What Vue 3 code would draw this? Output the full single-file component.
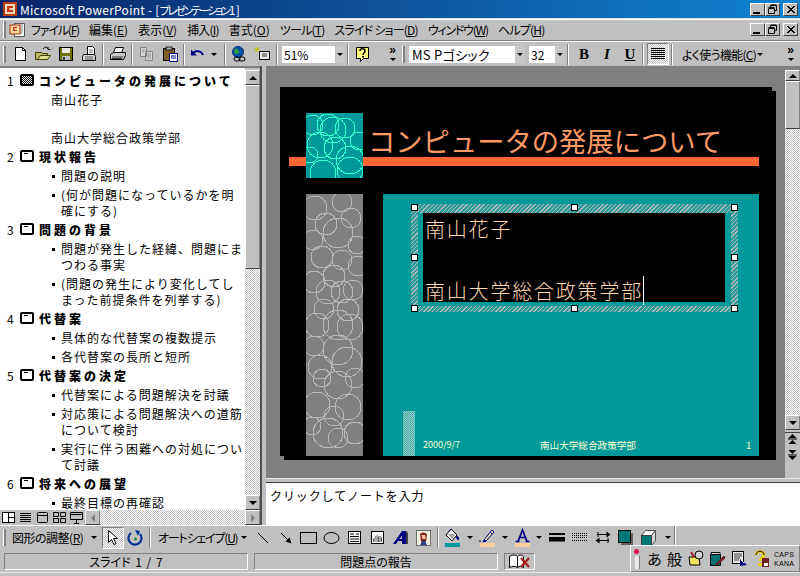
<script setup>
// PowerPoint 2000 window, normal view with outline + slide + notes

const menus = [
  ['ファイル', 'F', 'k4'], ['編集', 'E', ''], ['表示', 'V', ''], ['挿入', 'I', 'k2'], ['書式', 'O', ''],
  ['ツール', 'T', 'k2'], ['スライド ショー', 'D', 'k2'], ['ウィンドウ', 'W', 'k3'], ['ヘルプ', 'H', 'k2'],
]

const outline = [
  { no: 1, title: 'コンピュータの発展について', filled: true, sub: ['南山花子', '', '南山大学総合政策学部'] },
  { no: 2, title: '現状報告', items: [['問題の説明'], ['(何が問題になっているかを明', '確にする)']] },
  { no: 3, title: '問題の背景', items: [['問題が発生した経緯、問題にま', 'つわる事実'], ['(問題の発生により変化してし', 'まった前提条件を列挙する)']] },
  { no: 4, title: '代替案', items: [['具体的な代替案の複数提示'], ['各代替案の長所と短所']] },
  { no: 5, title: '代替案の決定', items: [['代替案による問題解決を討議'], ['対応策による問題解決への道筋', 'について検討'], ['実行に伴う困難への対処につい', 'て討議']] },
  { no: 6, title: '将来への展望', items: [['最終目標の再確認']] },
]

const tealCircles = [
  [22, 12, 11], [39, 15, 10], [7, 12, 10], [14, 32, 13], [27, 17, 13],
  [44, 47, 14], [4, 42, 8], [17, 60, 13], [44, 57, 13], [29, 35, 11], [53, 28, 9],
]

const grayCircles = [
  [9, 14, 12], [36, 8, 10], [45, 24, 10], [32, 39, 15], [7, 46, 10], [51, 51, 9], [20, 30, 11],
  [16, 63, 11], [36, 66, 10], [52, 72, 10], [22, 98, 12], [36, 98, 11], [47, 96, 10], [8, 88, 11],
  [28, 82, 11], [18, 115, 10], [42, 116, 11],
  [32, 131, 15], [11, 131, 12], [44, 133, 13], [32, 156, 15], [41, 168, 15], [8, 152, 10],
  [14, 173, 12], [16, 184, 9], [49, 184, 10], [32, 191, 14], [11, 211, 13],
  [42, 213, 13], [22, 239, 15], [32, 244, 10], [49, 239, 11], [28, 222, 10], [6, 232, 9],
]
</script>

<template>
  <div class="app">
    <header class="titlebar">
      <svg class="app-icon" width="14" height="14" viewBox="0 0 14 14"><rect width="14" height="14" fill="#b8400c" /><rect x="2" y="2" width="10" height="10" fill="#e8d8c0" /><path d="M10 4H4v6h6V8H6.500V6H10z" fill="#c8380c" /></svg>
      <span class="title-text">Microsoft PowerPoint - [<span class="title-kana">プレゼンテーション</span>1]</span>
      <div class="win-btns">
        <button class="win-btn"><svg width="13" height="11" viewBox="0 0 13 11"><rect x="2" y="8" width="7" height="2" fill="#000" /></svg></button>
        <button class="win-btn"><svg width="13" height="11" viewBox="0 0 13 11"><path d="M4.500 3.500v-2h6v5h-2M2.500 4.500h6v5h-6z M2.500 3.500h6 M4.500 1h6" fill="none" stroke="#000" /></svg></button>
        <button class="win-btn gap"><svg width="13" height="11" viewBox="0 0 13 11"><path d="M3 2l7 7M4 2l7 7M10 2l-7 7M11 2l-7 7" stroke="#000" fill="none" /></svg></button>
      </div>
    </header>

    <nav class="menubar">
      <i class="grip"></i>
      <svg class="doc-icon" width="17" height="16" viewBox="0 0 17 16"><path d="M5.500 1.500h10v13h-10z" fill="#fff" stroke="#555" /><path d="M11 3h3M11 5h3M11 7h3M11 9h3M11 11h3" stroke="#888" /><rect x="1" y="3" width="10" height="9" fill="#f0d8a0" stroke="#b03010" /><path d="M8 5H4v4h4V8H5.500V6H8z" fill="#c03010" /></svg>
      <span v-for="m in menus" :key="m[1]" class="menu-item" :class="m[2]">{{ m[0] }}(<u>{{ m[1] }}</u>)</span>
      <div class="win-btns">
        <button class="win-btn"><svg width="13" height="11" viewBox="0 0 13 11"><rect x="2" y="8" width="7" height="2" fill="#000" /></svg></button>
        <button class="win-btn"><svg width="13" height="11" viewBox="0 0 13 11"><path d="M4.500 3.500v-2h6v5h-2M2.500 4.500h6v5h-6z M2.500 3.500h6 M4.500 1h6" fill="none" stroke="#000" /></svg></button>
        <button class="win-btn gap"><svg width="13" height="11" viewBox="0 0 13 11"><path d="M3 2l7 7M4 2l7 7M10 2l-7 7M11 2l-7 7" stroke="#000" fill="none" /></svg></button>
      </div>
    </nav>

    <div class="toolbar">
      <i class="grip"></i>
      <span class="tb first"><svg width="16" height="16" viewBox="0 0 16 16"><path d="M3.500 1.500h7l3 3v10h-10z" fill="#fff" stroke="#000" /><path d="M10.500 1.500v3h3" fill="none" stroke="#000" /></svg></span>
      <span class="tb"><svg width="16" height="16" viewBox="0 0 16 16"><path d="M.500 6.500h6l1 1h5v6H.500z" fill="#b8b860" stroke="#404000" /><path d="M2.500 13.500l3-4h10l-3 4z" fill="#e0e090" stroke="#404000" /><path d="M8 3c2-2.500 4-2.500 5 0M13 1v2.500h2.500" fill="none" stroke="#000" /></svg></span>
      <span class="tb"><svg width="16" height="16" viewBox="0 0 16 16"><rect x="1.500" y="1.500" width="13" height="13" fill="#707000" stroke="#000" /><rect x="4" y="2" width="8" height="5" fill="#e8e8e8" /><rect x="4" y="10" width="8" height="4" fill="#c0c0c0" /><rect x="5" y="11" width="2" height="3" fill="#303030" /></svg></span>
      <span class="tb"><svg width="16" height="16" viewBox="0 0 16 16"><path d="M6.500 .500h5l2 2v6h-7z" fill="#fff" stroke="#000" /><path d="M8 4h4M8 6h4" stroke="#777" /><path d="M2.500 8.500h11l1 2v4h-13v-4z" fill="#d8d8d8" stroke="#000" /><path d="M4 11h8M4 13h8" stroke="#555" /></svg></span>
      <i class="sep"></i>
      <span class="tb"><svg width="16" height="16" viewBox="0 0 16 16"><path d="M5.500 1.500h8l-2 5h-8z" fill="#fff" stroke="#000" /><path d="M.500 8.500l3-2h12v3l-2 4h-13z" fill="#c8c8c8" stroke="#000" /><path d="M2 11h11M2 12.500h10" stroke="#333" /></svg></span>
      <i class="sep"></i>
      <span class="tb"><svg width="16" height="16" viewBox="0 0 16 16"><path d="M1.500 1.500h6v9h-6zM6.500 5.500h7v9h-7z" fill="#d8d8d8" stroke="#808080" /><path d="M8 8h4M8 10h4M8 12h4M3 4h3M3 6h2" stroke="#909090" /></svg></span>
      <span class="tb"><svg width="16" height="16" viewBox="0 0 16 16"><rect x="1.500" y="2.500" width="11" height="12" fill="#806020" stroke="#000" /><rect x="4" y="1" width="6" height="3" fill="#b0b0b0" stroke="#000" stroke-width=".8" /><path d="M7.500 7.500h8v8h-8z" fill="#fff" stroke="#000080" /><path d="M9 10h5M9 12h5" stroke="#000080" /></svg></span>
      <i class="sep"></i>
      <span class="tb undo"><svg width="16" height="14" viewBox="0 0 16 14"><path d="M3 7c2-4 8-4 10 1" fill="none" stroke="#000080" stroke-width="2" /><path d="M1 2.500v6h6z" fill="#000080" /></svg></span>
      <i class="drop"></i>
      <i class="sep after-drop"></i>
      <span class="tb"><svg width="17" height="17" viewBox="0 0 17 17"><circle cx="7" cy="6" r="5.500" fill="#0850a8" stroke="#003070" /><path d="M4 3c2-1 3 1 4 2s-1 3-3 3-2-3-1-5z" fill="#30a040" /><rect x="3" y="11" width="6" height="4" rx="2" fill="none" stroke="#000" /><rect x="8" y="11" width="6" height="4" rx="2" fill="none" stroke="#000" /><path d="M11 2l2 2" stroke="#505050" /></svg></span>
      <span class="tb"><svg width="17" height="16" viewBox="0 0 17 16"><path d="M3 1v5M.500 3.500h5M1 1.500l4 4M5 1.500l-4 4" stroke="#c0c000" /><path d="M5.500 5.500h10v8h-10z" fill="#e8e8e8" stroke="#000" /><path d="M8 8h5M8 10h5" stroke="#333" /></svg></span>
      <i class="sep"></i>
      <span class="combo zoom-combo"><span class="combo-val">51%</span><i class="combo-btn"></i></span>
      <i class="sep"></i>
      <span class="tb"><svg width="16" height="17" viewBox="0 0 16 17"><path d="M1.500 1.500h12v11h-5l-3 3v-3h-4z" fill="#ffff80" stroke="#000" /><path d="M5 5c0-3 5-3 5 0 0 2-2 2-2 4" fill="none" stroke="#000" stroke-width="1.600" /><rect x="7" y="10" width="2" height="1.500" /></svg></span>
      <span class="chevron"><b class="chev-mark">»</b><i class="chev-drop"></i></span>

      <i class="grip second"></i>
      <span class="combo font-combo"><span class="combo-val">MS Pゴシック</span><i class="combo-btn"></i></span>
      <span class="combo size-combo"><span class="combo-val">32</span><i class="combo-btn"></i></span>
      <i class="sep"></i>
      <span class="tb fmt bold">B</span>
      <span class="tb fmt italic">I</span>
      <span class="tb fmt under">U</span>
      <i class="sep"></i>
      <span class="tb pressed"><svg width="16" height="14" viewBox="0 0 16 14"><path d="M1 1.500h14M1 3.500h14M1 5.500h14M1 7.500h14M1 9.500h14M1 11.500h14" stroke="#000" /></svg></span>
      <i class="sep"></i>
      <span class="tb-label often">よく使う機能(<u>C</u>)</span>
      <i class="drop often-drop"></i>
      <span class="chevron last"><b class="chev-mark">»</b><i class="chev-drop"></i></span>
    </div>

    <main class="workspace">
      <section class="left">
        <div class="left-top">
          <div class="outline">
            <template v-for="s in outline" :key="s.no">
              <div class="o-title">
                <span class="o-no">{{ s.no }}</span>
                <i class="o-icon" :class="{ filled: s.filled }"></i>
                <b class="o-head">{{ s.title }}</b>
              </div>
              <div v-for="(t, i) in s.sub" :key="i" class="o-sub">{{ t }}</div>
              <div v-for="(lines, i) in s.items" :key="i" class="o-item">
                <div v-for="l in lines" :key="l">{{ l }}</div>
              </div>
            </template>
          </div>
          <div class="vscroll left-scroll">
            <button class="sb-btn"><i class="tri up"></i></button>
            <div class="sb-thumb tall"></div>
            <div class="sb-track"></div>
            <button class="sb-btn"><i class="tri down"></i></button>
          </div>
        </div>
        <div class="viewbar">
          <div class="views">
            <svg width="17" height="15" viewBox="0 0 17 15"><rect x="2.500" y="2.500" width="12" height="10" fill="#fff" stroke="#000" /><path d="M8.500 2v11M8.500 7.500h6" stroke="#000" /></svg>
            <svg width="17" height="15" viewBox="0 0 17 15"><path d="M3 3.500h11M3 5.500h11M3 7.500h11M3 9.500h11M3 11.500h11" stroke="#000" /></svg>
            <svg width="17" height="15" viewBox="0 0 17 15"><rect x="3.500" y="2.500" width="10" height="10" rx="1" fill="#c0c0c0" stroke="#000" /><path d="M4 5.500h9" stroke="#000" /></svg>
            <svg width="17" height="15" viewBox="0 0 17 15"><path d="M2.500 2.500h5v4h-5zM9.500 2.500h5v4h-5zM2.500 8.500h5v4h-5zM9.500 8.500h5v4h-5z" fill="none" stroke="#000" /></svg>
            <svg width="17" height="15" viewBox="0 0 17 15"><path d="M2.500 2.500h12v7h-12z" fill="none" stroke="#000" /><path d="M2 4.500h13M8.500 10v3M6 13.500h5" stroke="#000" /></svg>
          </div>
          <button class="sb-btn h"><i class="tri left-tri gray"></i></button>
          <div class="sb-track"></div>
          <button class="sb-btn h"><i class="tri right-tri gray"></i></button>
        </div>
      </section>

      <div class="splitter"></div>

      <section class="right">
        <div class="slide-row">
          <div class="slide-area">
            <div class="slide">
              <div class="orange-bar"></div>
              <svg class="teal-square" width="57" height="65" viewBox="0 0 57 65" shape-rendering="crispEdges">
                <circle v-for="(c, i) in tealCircles" :key="i" :cx="c[0]" :cy="c[1]" :r="c[2]" fill="none" stroke="#33ffcc" />
              </svg>
              <div class="slide-title">コンピュータの発展について</div>
              <svg class="gray-strip" width="57" height="262" viewBox="0 0 57 262" shape-rendering="crispEdges">
                <circle v-for="(c, i) in grayCircles" :key="i" :cx="c[0]" :cy="c[1]" :r="c[2]" fill="none" stroke="#b8b8b8" />
              </svg>
              <div class="teal-box"></div>
              <div class="mini-strip"></div>
              <div class="textbox">
                <div class="textbox-pad">
                  <div class="textbox-inner">南山花子<br /><br /><span class="caret">南山大学総合政策学部</span></div>
                </div>
                <i class="handle hl ht"></i><i class="handle hm ht"></i><i class="handle hr ht"></i>
                <i class="handle hl hc"></i><i class="handle hr hc"></i>
                <i class="handle hl hb"></i><i class="handle hm hb"></i><i class="handle hr hb"></i>
              </div>
              <span class="foot f-date">2000/9/7</span>
              <span class="foot f-mid">南山大学総合政策学部</span>
              <span class="foot f-no">1</span>
            </div>
          </div>
          <div class="vscroll main-scroll">
            <div class="sb-cap"></div>
            <button class="sb-btn"><i class="tri up"></i></button>
            <div class="sb-thumb"></div>
            <div class="sb-track"></div>
            <button class="sb-btn"><i class="tri down"></i></button>
            <div class="page-btns">
              <svg width="15" height="28" viewBox="0 0 15 28"><path d="M7.500 1l4 4h-8zM7.500 7l4 4h-8z" /><path d="M3 6h9" stroke="#000" /><path d="M7.500 27l4-4h-8zM7.500 21l4-4h-8z" /><path d="M3 22h9" stroke="#000" /></svg>
            </div>
            <div class="sb-rest"></div>
          </div>
        </div>
        <div class="hsplit"></div>
        <div class="notes">クリックしてノートを入力</div>
      </section>
    </main>

    <div class="toolbar draw">
      <i class="grip"></i>
      <span class="tb-label arrange">図形の調整(<u>R</u>)</span>
      <i class="drop d5"></i>
      <span class="tb pressed arrow-btn"><svg width="14" height="17" viewBox="0 0 14 17"><path d="M2.500 1.500v12l3-3 2.500 5 2-1-2.500-5h4z" fill="#fff" stroke="#000" /></svg></span>
      <span class="tb"><svg width="17" height="17" viewBox="0 0 17 17"><path d="M4 4a6.500 6.500 0 1 0 9 1" fill="none" stroke="#003090" stroke-width="2.200" /><path d="M8 1l5 1-2 5z" fill="#003090" /><circle cx="8.500" cy="10" r="1.500" fill="#108040" /></svg></span>
      <i class="sep"></i>
      <span class="tb-label autoshape">オートシェイプ(<u>U</u>)</span>
      <i class="drop d5"></i>
      <span class="tb line-btn"><svg width="14" height="14" viewBox="0 0 14 14"><path d="M2 2l10 10" stroke="#000" /></svg></span>
      <span class="tb"><svg width="14" height="14" viewBox="0 0 14 14"><path d="M2 2l9 9" stroke="#000" /><path d="M12.500 12.500l-6-2 4-4z" /></svg></span>
      <span class="tb"><svg width="17" height="14" viewBox="0 0 17 14"><rect x=".500" y="1.500" width="16" height="11" fill="none" stroke="#000" /></svg></span>
      <span class="tb"><svg width="17" height="14" viewBox="0 0 17 14"><ellipse cx="8.500" cy="7" rx="7.500" ry="5.500" fill="none" stroke="#000" /></svg></span>
      <span class="tb"><svg width="15" height="15" viewBox="0 0 15 15"><rect x="1.500" y="1.500" width="12" height="12" fill="#fff" stroke="#000" /><path d="M3 4h4M3 6.500h9M3 9h9M3 11.500h9M9 4h3" stroke="#000" /></svg></span>
      <span class="tb"><svg width="15" height="15" viewBox="0 0 15 15"><rect x="1.500" y="1.500" width="12" height="12" fill="#fff" stroke="#000" /><path d="M3 12h9V8l-2-2-1 1-2-3-2 3-2 2z" fill="#555" /><path d="M7 3v9M5 7v5M10 7v5" stroke="#fff" /></svg></span>
      <span class="tb"><svg width="17" height="17" viewBox="0 0 17 17"><path d="M1 15L10 2h4v13h-4v-3H6l-2 3z" fill="#000080" /><path d="M7.500 10H10V6.500z" fill="#c0c0c0" /><path d="M14 2l2 2v11h-2z" fill="#404040" /></svg></span>
      <span class="tb"><svg width="15" height="16" viewBox="0 0 15 16"><rect x=".500" y=".500" width="14" height="15" fill="#f0f0e0" stroke="#000" stroke-dasharray="1 1" /><path d="M4 4c2-2 6-2 7 1l-1 7H5z" fill="#902020" /><path d="M5.500 5h4v4h-3z" fill="#f0c8a0" /><path d="M4 15l3-5 2 1 2 4z" fill="#204080" /></svg></span>
      <i class="sep"></i>
      <span class="tb"><svg width="17" height="19" viewBox="0 0 17 19"><path d="M7 1l6 6-5 6-6-6z" fill="#f0f0f0" stroke="#000" /><path d="M4 6h7l-3 5z" fill="#a0a0a0" /><path d="M13 8c2 1 2 3 1 4-1-1-2-2-1-4zM5 3l3-2" fill="#000080" stroke="#000080" /><rect x="1" y="15" width="15" height="4" fill="#009999" /></svg></span>
      <i class="drop d3"></i>
      <span class="tb l3"><svg width="17" height="19" viewBox="0 0 17 19"><path d="M5 12L13 2l2 2-8 9z" fill="#f8e8a0" stroke="#000080" /><path d="M5 12l2 1-3 1zM11 4l2 2" stroke="#000080" fill="#000080" /><path d="M0 13h3" stroke="#000" stroke-dasharray="2 1" /><rect x="1" y="15" width="15" height="4" fill="#ffcc99" /></svg></span>
      <i class="drop d3"></i>
      <span class="tb l3"><svg width="17" height="19" viewBox="0 0 17 19"><path d="M1.500 13.500h4M11.500 13.500h4M4 13.500L8.500 2l4.500 11.500M5.500 9.500h6" fill="none" stroke="#000080" stroke-width="1.700" /><rect x="1" y="15" width="15" height="4" fill="#ffcc99" /></svg></span>
      <i class="drop d2"></i>
      <span class="tb l3"><svg width="16" height="10" viewBox="0 0 16 10"><rect y="0" width="16" height="2" /><rect y="4" width="16" height="4.500" /></svg></span>
      <span class="tb"><svg width="16" height="10" viewBox="0 0 16 10"><path d="M0 .500h16M0 2.500h16M0 4.500h16M0 7.500h16" stroke="#000" stroke-dasharray="1 1" /></svg></span>
      <span class="tb"><svg width="16" height="15" viewBox="0 0 16 15"><path d="M2 4.500h12M2 10.500h12" stroke="#000" /><path d="M15.500 4.500l-4-3v6zM.500 10.500l4-3v6z" /><path d="M3 2v5M13 8v5" stroke="#000" /></svg></span>
      <span class="tb"><svg width="15" height="15" viewBox="0 0 15 15"><rect x="3" y="3" width="12" height="12" fill="#606060" /><rect x=".500" y=".500" width="12" height="12" fill="#007878" stroke="#000" /></svg></span>
      <span class="tb"><svg width="17" height="17" viewBox="0 0 17 17"><path d="M1.500 6.500l4-5h10l-4 5z" fill="#fff" stroke="#505050" /><path d="M11.500 6.500l4-5v10l-4 5z" fill="#d8d8d8" stroke="#505050" /><rect x="1.500" y="6.500" width="10" height="10" fill="#007878" stroke="#404040" /></svg></span>
      <i class="drop d5"></i>
      <i class="draw-end"></i>
    </div>

    <footer class="statusbar">
      <div class="st-panel st-1">スライド 1 / 7</div>
      <div class="st-panel st-2">問題点の報告</div>
      <div class="st-panel st-3"><svg width="22" height="15" viewBox="0 0 22 15"><path d="M.500 13.500V2.500c3-2 6-2 8 0v11c-2-1.500-5-1.500-8 0z" fill="#fff" stroke="#000" /><path d="M8.500 2.500c2-2 4-2 6 0v11c-2-1.500-4-1.500-6 0z" fill="#fff" stroke="#000" /><path d="M12 4l8 9M20 4l-8 9" stroke="#a02020" stroke-width="2.200" /></svg></div>
    </footer>

    <aside class="ime">
      <div class="ime-pin"><i class="pin-head"></i><i class="pin-bar"></i></div>
      <span class="ime-char a">あ</span>
      <span class="ime-char">般</span>
      <svg class="ime-ico" width="16" height="17" viewBox="0 0 16 17"><path d="M1 7h10l1 8H2z" fill="#f0e060" stroke="#000" /><circle cx="11" cy="5" r="4" fill="#d0d0d0" stroke="#000" /><path d="M3 2l3 5" stroke="#a02020" stroke-width="2" /></svg>
      <svg class="ime-ico" width="17" height="17" viewBox="0 0 17 17"><path d="M1.500 4.500h10v11h-10z" fill="#007070" stroke="#000" /><path d="M2 2.500h9v2H2z" fill="#e0e0e0" stroke="#000" /><path d="M7 14l8-8 1 2-8 7z" fill="#a02020" stroke="#402020" /></svg>
      <svg class="ime-ico" width="17" height="17" viewBox="0 0 17 17"><rect x="1.500" y="1.500" width="11" height="12" fill="#f0f0f0" stroke="#000" /><path d="M3 4h8M3 6h8M3 8h6M3 10h5" stroke="#333" /><path d="M9 9l7 6-7 1z" fill="#000080" /><path d="M10 10l3 3" stroke="#fff" /></svg>
      <svg class="ime-ico" width="17" height="18" viewBox="0 0 17 18"><path d="M3 5c0-5 8-5 8 0 0 3-4 3-4 6" fill="none" stroke="#e8d000" stroke-width="3" /><rect x="5" y="13" width="4" height="3" fill="#e8d000" /><path d="M3 5c0-5 8-5 8 0" fill="none" stroke="#000" /><path d="M9 8h7v9H9z" fill="#702020" /><path d="M11 13h4v3h-4z" fill="#fff" /></svg>
      <div class="ime-caps"><span>CAPS</span><span>KANA</span></div>
    </aside>
  </div>
</template>

<style>
html, body { margin: 0; background: #c0c0c0; }
</style>

<style scoped>
.app {
  position: relative;
  width: 800px;
  height: 576px;
  overflow: hidden;
  display: flex;
  flex-direction: column;
  background: #c0c0c0;
  font-family: "Noto Sans CJK JP", "Liberation Sans", sans-serif;
  font-size: 12px;
  font-feature-settings: "palt";
  color: #000;
}
i { display: block; flex: none; }
button { padding: 0; margin: 0; }

.titlebar {
  flex: none;
  height: 18px;
  display: flex;
  align-items: center;
  background: linear-gradient(90deg, #0a246a, #1084d0);
  color: #fff;
  border-bottom: 1px solid #e0e0e0;
}
.app-icon { margin-left: 3px; flex: none; }
.title-text { margin-left: 3px; font-size: 12px; letter-spacing: .25px; white-space: nowrap; }
.title-kana { font-size: 11px; letter-spacing: -2.2px; }
.win-btns { margin-left: auto; margin-right: 2px; display: flex; }
.win-btn {
  width: 15px;
  height: 13px;
  box-sizing: border-box;
  background: #c0c0c0;
  border: 1px solid;
  border-color: #fff #404040 #404040 #fff;
  display: flex;
  overflow: hidden;
}
.win-btn.gap { margin-left: 3px; }

.menubar {
  flex: none;
  height: 21px;
  display: flex;
  align-items: center;
  border-bottom: 1px solid #808080;
  box-shadow: inset 0 1px 0 #fff;
}
.grip {
  width: 1px;
  height: 17px;
  margin-left: 3px;
  background: #fff;
  border-right: 2px solid #808080;
}
.doc-icon { margin-left: 3px; flex: none; }
.menu-item { margin-left: 10px; white-space: nowrap; line-height: 16px; }
.menu-item:first-of-type { margin-left: 5px; }
.k2 { letter-spacing: -.8px; }
.k3 { letter-spacing: -1.2px; }
.k4 { letter-spacing: -1.2px; }
u { text-underline-offset: 1px; }

.toolbar {
  flex: none;
  height: 25px;
  display: flex;
  align-items: center;
  border-top: 1px solid #fff;
  box-sizing: border-box;
}
.tb {
  flex: none;
  width: 23px;
  height: 22px;
  display: flex;
  align-items: center;
  justify-content: center;
}
.tb.first { margin-left: 2px; }
.tb.undo { width: 22px; }
.tb.pressed {
  width: 22px;
  margin-left: 1px;
  box-sizing: border-box;
  border: 1px solid;
  border-color: #808080 #fff #fff #808080;
  background: repeating-conic-gradient(#fff 0 25%, #c0c0c0 0 50%) 0 0 / 2px 2px;
}
.sep {
  width: 0;
  height: 21px;
  margin: 0 2px;
  border-left: 1px solid #808080;
  border-right: 1px solid #fff;
}
.sep.after-drop { margin-left: 7px; }
.drop {
  width: 0;
  height: 0;
  margin-left: 2px;
  border-style: solid;
  border-width: 3px 3px 0;
  border-color: #000 transparent transparent;
}
.d2 { margin-left: 2px; }
.d3 { margin-left: 3px; }
.d5 { margin-left: 5px; }
.combo {
  flex: none;
  height: 17px;
  margin-left: 2px;
  box-sizing: border-box;
  display: flex;
  align-items: center;
  background: #fff;
  overflow: hidden;
}
.combo-val { flex: 1; padding-left: 2px; font-size: 12px; line-height: 15px; white-space: nowrap; }
.combo-btn {
  width: 10px;
  height: 100%;
  background: #c8c8c8;
  position: relative;
}
.combo-btn::after {
  content: "";
  position: absolute;
  left: 2px;
  top: 7px;
  border-style: solid;
  border-width: 3px 3px 0;
  border-color: #000 transparent transparent;
}
.zoom-combo { width: 63px; }
.font-combo { width: 116px; margin-left: 4px; }
.font-combo .combo-val { padding-left: 3px; font-size: 13px; letter-spacing: .3px; }
.size-combo { width: 36px; margin-left: 4px; }
.chevron {
  flex: none;
  width: 7px;
  height: 18px;
  margin-left: 15px;
  display: flex;
  flex-direction: column;
  align-items: center;
}
.chev-mark { font-family: "Liberation Sans", sans-serif; font-size: 12px; font-weight: 700; line-height: 11px; }
.chev-drop {
  margin-top: 2px;
  border-style: solid;
  border-width: 3px 3px 0;
  border-color: #000 transparent transparent;
}
.chevron.last { margin-left: 24px; }
.st-3 svg { display: block; }
.grip.second { margin-left: 6px; }
.fmt { font-family: "Liberation Serif", serif; font-size: 15px; font-weight: 700; padding-left: 3px; box-sizing: border-box; }
.italic { font-style: italic; }
.under { text-decoration: underline; }
.tb-label { flex: none; white-space: nowrap; }
.often { width: 72px; margin-left: 7px; letter-spacing: -.7px; }
.often-drop { margin-left: 3px; }

.workspace { flex: none; height: 459px; display: flex; }
.left { width: 260px; flex: none; display: flex; flex-direction: column; }
.left-top { flex: 1; min-height: 0; display: flex; border-top: 2px solid #808080; box-sizing: border-box; }
.outline {
  width: 245px;
  flex: none;
  background: #fff;
  overflow: hidden;
  padding-top: 5px;
  box-sizing: border-box;
  font-feature-settings: normal;
}
.o-title, .o-sub, .o-item { line-height: 16px; padding-bottom: 3px; white-space: nowrap; letter-spacing: 1px; }
.o-title { display: flex; align-items: center; }
.o-no { width: 20px; flex: none; padding-left: 7px; box-sizing: border-box; letter-spacing: 0; }
.o-icon {
  width: 10px;
  height: 8px;
  margin-bottom: 2px;
  border: 2px solid #000;
  border-radius: 2px;
  background: linear-gradient(#000, #000) no-repeat 2px 1px / 4px 1px, #fff;
}
.o-icon.filled { background: repeating-conic-gradient(#000 0 25%, #fff 0 50%) 0 0 / 2px 2px; }
.o-head { margin-left: 5px; font-size: 12px; font-weight: 900; letter-spacing: 3px; }
.o-sub { padding-left: 51px; height: 16px; }
.o-item { padding-left: 61px; position: relative; }
.o-item::before {
  content: "";
  position: absolute;
  left: 52px;
  top: 7px;
  width: 3px;
  height: 3px;
  background: #000;
}

.vscroll { width: 15px; flex: none; display: flex; flex-direction: column; background: #c0c0c0; }
.sb-btn {
  flex: none;
  width: 15px;
  height: 15px;
  box-sizing: border-box;
  background: #c0c0c0;
  border: 1px solid;
  border-color: #fff #808080 #404040 #fff;
  display: flex;
  align-items: center;
  justify-content: center;
}
.sb-thumb {
  flex: none;
  height: 48px;
  box-sizing: border-box;
  background: #c0c0c0;
  border: 1px solid;
  border-color: #fff #808080 #404040 #fff;
}
.sb-thumb.tall { height: 184px; }
.sb-track {
  flex: 1;
  min-width: 0;
  background: repeating-conic-gradient(#fff 0 25%, #c0c0c0 0 50%) 0 0 / 2px 2px;
}
.left-scroll { padding-top: 2px; box-sizing: border-box; }
.tri { width: 0; height: 0; border-style: solid; }
.tri.up { border-width: 0 4px 4px; border-color: transparent transparent #000; }
.tri.down { border-width: 4px 4px 0; border-color: #000 transparent transparent; }
.tri.left-tri { border-width: 4px 4px 4px 0; border-color: transparent #808080 transparent transparent; }
.tri.right-tri { border-width: 4px 0 4px 4px; border-color: transparent transparent transparent #808080; }

.viewbar { flex: none; height: 15px; display: flex; }
.views { width: 85px; flex: none; display: flex; overflow: hidden; }
.views svg { display: block; flex: none; }
.sb-btn.h { width: 15px; }

.splitter {
  width: 6px;
  flex: none;
  box-sizing: border-box;
  background: #c0c0c0;
  border-left: 2px solid #505050;
}
.right { flex: 1; display: flex; flex-direction: column; min-width: 0; }
.slide-row { flex: none; height: 412px; display: flex; }
.slide-area { flex: 1; background: #808080; overflow: hidden; }
.sb-cap { flex: none; height: 4px; background: #808080; }
.main-scroll .sb-btn:first-of-type { height: 11px; }
.page-btns {
  flex: none;
  height: 30px;
  margin-top: 2px;
  border-top: 1px solid #404040;
  box-sizing: border-box;
}
.page-btns svg { display: block; }
.sb-rest { height: 16px; flex: none; }
.hsplit {
  flex: none;
  height: 5px;
  box-sizing: border-box;
  background: #c0c0c0;
  border-top: 1px solid #e8e8e8;
  border-bottom: 1px solid #404040;
}
.notes { flex: 1; background: #fff; padding: 5px 4px; font-size: 12px; line-height: 16px; letter-spacing: .9px; font-feature-settings: normal; }

/* slide: pieces sit on a free canvas in slide coordinates */
.slide {
  position: relative;
  width: 492px;
  height: 369px;
  margin: 21px 0 0 14px;
  background: #000;
  box-shadow: 4px 4px 0 #000;
  font-feature-settings: normal;
}
.orange-bar { position: absolute; left: 9px; top: 70px; width: 470px; height: 9px; background: #ff6633; }
.teal-square { position: absolute; left: 26px; top: 26px; background: #009999; }
.slide-title {
  position: absolute;
  left: 88px;
  top: 33px;
  font-size: 27.3px;
  line-height: 40px;
  color: #ff9966;
  white-space: nowrap;
}
.gray-strip { position: absolute; left: 26px; top: 107px; background: #808080; }
.teal-box { position: absolute; left: 103px; top: 107px; width: 376px; height: 262px; background: #009999; }
.mini-strip {
  position: absolute;
  left: 123px;
  top: 324px;
  width: 12px;
  height: 45px;
  background: repeating-conic-gradient(#8fd0cc 0 25%, #4aa8a4 0 50%) 0 0 / 2px 2px;
}
.textbox {
  position: absolute;
  left: 131px;
  top: 117px;
  width: 327px;
  height: 108px;
  box-sizing: border-box;
  padding: 9px 7px 6px;
  background: repeating-linear-gradient(-45deg, #b0b8b8 0 1px, #2a9c9c 1px 3px);
}
.textbox-pad {
  height: 100%;
  box-sizing: border-box;
  padding: 0 6px 4px 5px;
  background: #009999;
}
.textbox-inner {
  height: 100%;
  background: #000;
  padding-left: 2px;
  font-size: 20px;
  font-weight: 300;
  line-height: 31px;
  letter-spacing: 1.8px;
  color: #ffd8b0;
  white-space: nowrap;
}
.caret { border-right: 1px solid #fff; }
.handle {
  position: absolute;
  width: 7px;
  height: 7px;
  box-sizing: border-box;
  margin: -3px 0 0 -3px;
  background: #fff;
  border: 1px solid #000;
}
.hl { left: 3px; }
.hm { left: 163px; }
.hr { left: 323px; }
.ht { top: 3px; }
.hc { top: 53px; }
.hb { top: 104px; }
.foot { position: absolute; top: 352px; font-size: 9.6px; line-height: 12px; color: #ffffcc; white-space: nowrap; }
.f-date { left: 143px; font-size: 9px; }
.f-mid { left: 260px; }
.f-no { left: 466px; }

.draw .arrange { width: 74px; margin-left: 6px; letter-spacing: -.5px; }
.draw .arrow-btn { margin-left: 5px; }
.draw .autoshape { width: 78px; margin-left: 5px; letter-spacing: -1.2px; }
.draw .line-btn { margin-left: 4px; }
.draw .l3 { margin-left: 3px; }
.draw-end {
  margin-left: 3px;
  height: 100%;
  border-left: 1px solid #808080;
  border-right: 1px solid #fff;
}
.draw { height: 24px; }

.statusbar {
  flex: none;
  height: 24px;
  display: flex;
  align-items: flex-start;
  padding: 4px 0 0 4px;
  box-sizing: border-box;
  border-bottom: 1px solid #e8e8e8;
}
.st-panel {
  height: 17px;
  box-sizing: border-box;
  border: 1px solid;
  border-color: #808080 #fff #fff #808080;
  display: flex;
  align-items: center;
  justify-content: center;
  white-space: nowrap;
  line-height: 15px;
}
.st-1, .st-2 { width: 244px; }
.st-1 { word-spacing: 2px; }
.st-2 { margin-left: 6px; }
.st-3 { width: 31px; margin-left: 6px; }

/* IME language bar floats over the status bar */
.ime {
  position: absolute;
  left: 630px;
  top: 545px;
  width: 170px;
  height: 27px;
  box-sizing: border-box;
  background: #c0c0c0;
  border: 1px solid;
  border-color: #fff #808080 #808080 #fff;
  display: flex;
  align-items: center;
  font-feature-settings: normal;
}
.ime-pin { width: 8px; margin-left: 2px; flex: none; }
.pin-head { width: 5px; height: 5px; margin-left: 1px; border-radius: 50%; background: #e0104a; }
.pin-bar { width: 4px; height: 13px; margin: 2px 0 0 2px; background: #e8e8e8; border-right: 1px solid #808080; }
.ime-char { font-size: 15px; line-height: 20px; margin-left: 4px; width: 16px; flex: none; }
.ime-char.a { margin-left: 6px; margin-right: 0; }
.ime-ico { margin-left: 5px; flex: none; }
.ime-caps {
  margin-left: 4px;
  display: flex;
  flex-direction: column;
  font-family: "Liberation Sans", sans-serif;
  font-size: 7px;
  line-height: 9px;
  letter-spacing: .3px;
}
</style>
